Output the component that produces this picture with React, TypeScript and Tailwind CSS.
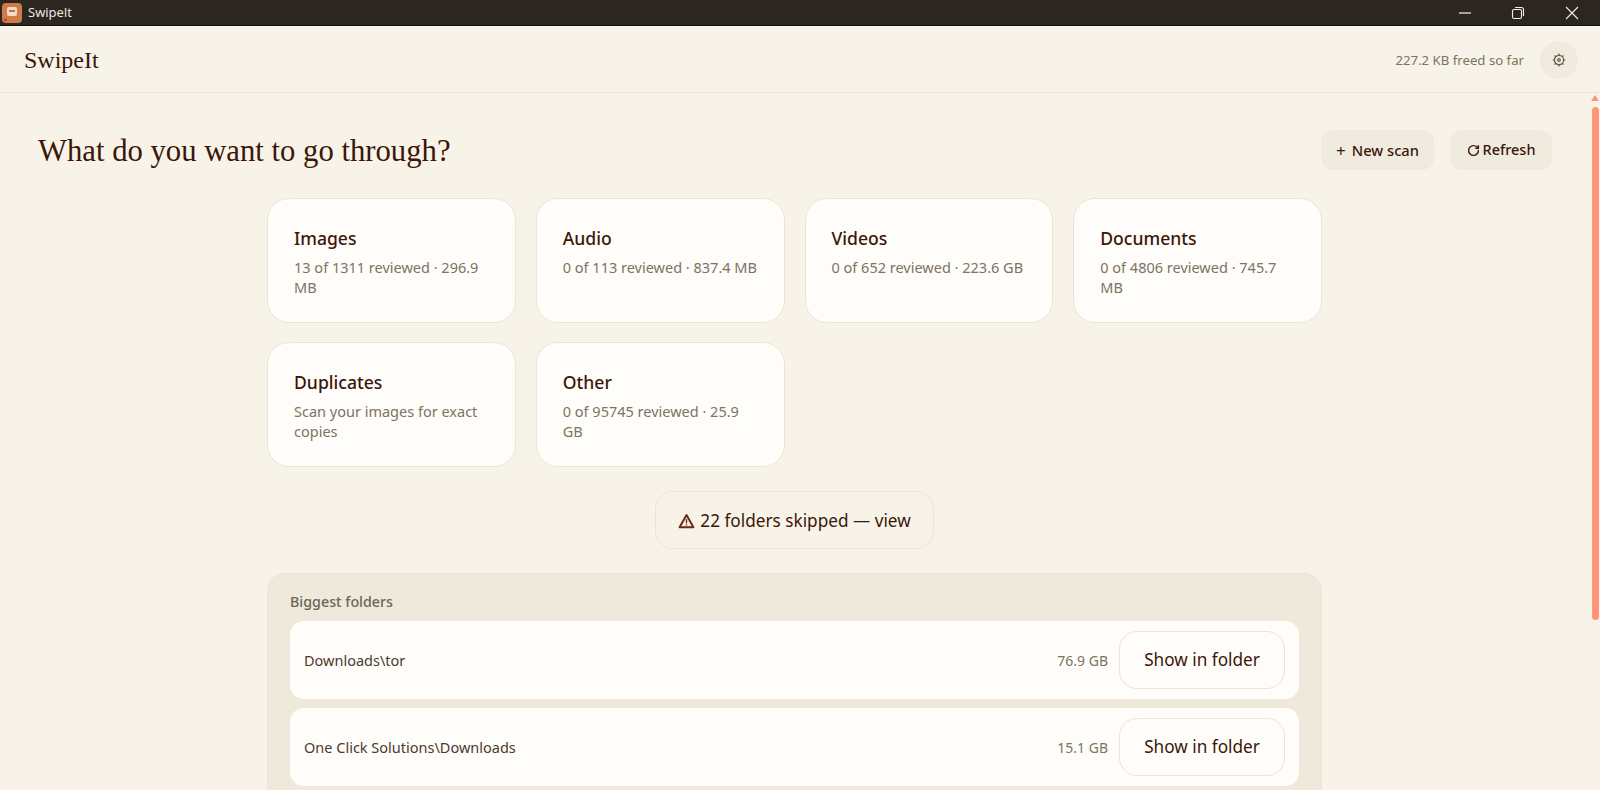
import React from 'react'
import { RotateCw } from 'lucide-react'

const serif = "font-['Liberation_Serif',serif]"

const categories = [
  { name: 'Images', detail: '13 of 1311 reviewed · 296.9 MB' },
  { name: 'Audio', detail: '0 of 113 reviewed · 837.4 MB' },
  { name: 'Videos', detail: '0 of 652 reviewed · 223.6 GB' },
  { name: 'Documents', detail: '0 of 4806 reviewed · 745.7 MB' },
  { name: 'Duplicates', detail: 'Scan your images for exact copies' },
  { name: 'Other', detail: '0 of 95745 reviewed · 25.9 GB' },
]

const folders = [
  { path: 'Downloads\\tor', size: '76.9 GB' },
  { path: 'One Click Solutions\\Downloads', size: '15.1 GB' },
]

const TitleBar = () => (
  <div className="h-[26px] shrink-0 flex items-center bg-[#2c2620] border-b border-[#14110e] text-[#f3eee6]">
    <svg width="20" height="20" viewBox="0 0 20 20" className="ml-[2px]">
      <rect x="0" y="0" width="20" height="20" rx="4" fill="#d2794a" />
      <rect x="5" y="4" width="10" height="9" rx="2" fill="#f3dccb" />
      <rect x="7" y="7" width="6" height="2" fill="#c9704a" />
      <circle cx="16.5" cy="17" r="1.6" fill="#7fa04f" />
      <circle cx="3.5" cy="17" r="1.4" fill="#a9482a" />
    </svg>
    <span className="ml-[6px] text-[13px] font-['Open_Sans',sans-serif]">SwipeIt</span>
    <div className="ml-auto flex items-center">
      <div className="w-[54px] flex justify-center">
        <svg width="14" height="14" viewBox="0 0 14 14"><path d="M1 7h12" stroke="#f3eee6" strokeWidth="1.2" /></svg>
      </div>
      <div className="w-[52px] flex justify-center">
        <svg width="14" height="14" viewBox="0 0 14 14" fill="none" stroke="#f3eee6" strokeWidth="1.1">
          <rect x="1.5" y="3.5" width="9" height="9" rx="1.5" />
          <path d="M4 1.5h6.5a2 2 0 0 1 2 2V10" />
        </svg>
      </div>
      <div className="w-[56px] flex justify-center">
        <svg width="14" height="14" viewBox="0 0 14 14"><path d="M1 1l12 12M13 1L1 13" stroke="#f3eee6" strokeWidth="1.1" /></svg>
      </div>
    </div>
  </div>
)

const Header = () => (
  <div className="h-[67px] shrink-0 flex items-center justify-between pl-6 pr-[22px] pt-[2px] border-b border-[#ebe5d9]">
    <span className={`${serif} text-[24px] text-[#3b1609]`}>SwipeIt</span>
    <div className="flex items-center gap-[16px]">
      <span className="text-[13.2px] pt-[1px] text-[#7b7364]">227.2 KB freed so far</span>
      <button className="w-[38px] h-[38px] rounded-full bg-[#f0ebdf] flex items-center justify-center">
        <svg width="16" height="16" viewBox="0 0 16 16" fill="none" stroke="#5f5648" strokeWidth="1.2">
          <circle cx="8" cy="8" r="4.6" />
          <circle cx="8" cy="8" r="1.3" />
          <path d="M8 1.6v1.8M8 12.6v1.8M1.6 8h1.8M12.6 8h1.8M3.5 3.5l1.2 1.2M11.3 11.3l1.2 1.2M12.5 3.5l-1.2 1.2M4.7 11.3l-1.2 1.2" />
        </svg>
      </button>
    </div>
  </div>
)

const CategoryCard = ({ name, detail }: { name: string; detail: string }) => (
  <div className="h-[125px] rounded-[22px] bg-[#fffdf9] border border-[#ebe5d9] px-[26px] pt-[26px]">
    <div className="text-[17.6px] leading-[26px] font-medium text-[#3b1609]">{name}</div>
    <div className="mt-[6px] text-[14.5px] leading-5 text-[#7b7364]">{detail}</div>
  </div>
)

const FolderRow = ({ path, size }: { path: string; size: string }) => (
  <div className="h-[78px] rounded-[14px] bg-[#fffdf9] flex items-center pl-[14px] pr-[14px]">
    <span className="text-[14.5px] pt-[1px] text-[#4c3a2d]">{path}</span>
    <span className="ml-auto text-sm pt-[1px] text-[#7b7364]">{size}</span>
    <button className="ml-[11px] w-[166px] h-[58px] rounded-[18px] bg-[#fffdf9] border border-[#ebe5d9] text-[17.2px] text-[#3b1609]">
      Show in folder
    </button>
  </div>
)

const ScrollBar = () => (
  <div className="w-[10px] shrink-0 flex flex-col items-center pt-[2px]">
    <div className="w-0 h-0 border-x-[4px] border-x-transparent border-b-[6px] border-b-[#ff9478]" />
    <div className="mt-[6px] w-[7px] h-[513px] rounded-full bg-[#ff9478]" />
  </div>
)

export default function App() {
  return (
    <div className="h-[790px] w-full overflow-hidden flex flex-col bg-[#f8f3e8] font-['Noto_Sans',sans-serif]">
      <TitleBar />
      <Header />
      <div className="flex-1 flex min-h-0">
        <main className="flex-1 min-w-0 px-[38px] pt-[37px]">
          <div className="flex items-center justify-between h-[40px]">
            <h1 className={`${serif} text-[30.7px] pt-[3px] text-[#3b1609]`}>What do you want to go through?</h1>
            <div className="flex gap-4">
              <button className="h-[40px] w-[113px] rounded-xl bg-[#f0ebdf] text-[14.7px] font-medium text-[#3b1609] flex items-center justify-center gap-[6px]">
                <span className="font-normal text-[17px] leading-none">+</span>
                <span className="pt-[1px]">New scan</span>
              </button>
              <button className="h-[40px] w-[102px] rounded-xl bg-[#f0ebdf] text-[14.5px] font-medium text-[#3b1609] flex items-center justify-center gap-[3px]">
                <RotateCw size={13} strokeWidth={2.6} />
                <span>Refresh</span>
              </button>
            </div>
          </div>
          <div className="w-[1055px] ml-[229px] mt-[28px]">
            <div className="grid grid-cols-4 gap-x-5 gap-y-[19px]">
              {categories.map((c) => (
                <CategoryCard key={c.name} name={c.name} detail={c.detail} />
              ))}
            </div>
            <div className="flex justify-center mt-[24px]">
              <button className="h-[58px] w-[279px] pt-[1px] rounded-[18px] border border-[#ebe5d9] text-[17.2px] text-[#3b1609] flex items-center justify-center gap-[5px]">
                <svg width="17" height="16" viewBox="0 0 17 16" fill="none" stroke="#6b2a16" strokeWidth="2" strokeLinejoin="round">
                  <path d="M8.5 2 15.4 14.2H1.6z" />
                  <path d="M8.5 6v4.2M8.5 11.2v1.4" strokeWidth="1.4" />
                </svg>
                <span>22 folders skipped — view</span>
              </button>
            </div>
            <section className="mt-[24px] rounded-[18px] bg-[#efe9dc] border border-[#ebe5d9] pl-[22px] pr-[22px] pt-[18px] pb-6">
              <div className="text-[14.3px] leading-5 font-medium text-[#6e6557]">Biggest folders</div>
              <div className="mt-[9px] flex flex-col gap-[9px]">
                {folders.map((f) => (
                  <FolderRow key={f.path} path={f.path} size={f.size} />
                ))}
              </div>
            </section>
          </div>
        </main>
        <ScrollBar />
      </div>
    </div>
  )
}
